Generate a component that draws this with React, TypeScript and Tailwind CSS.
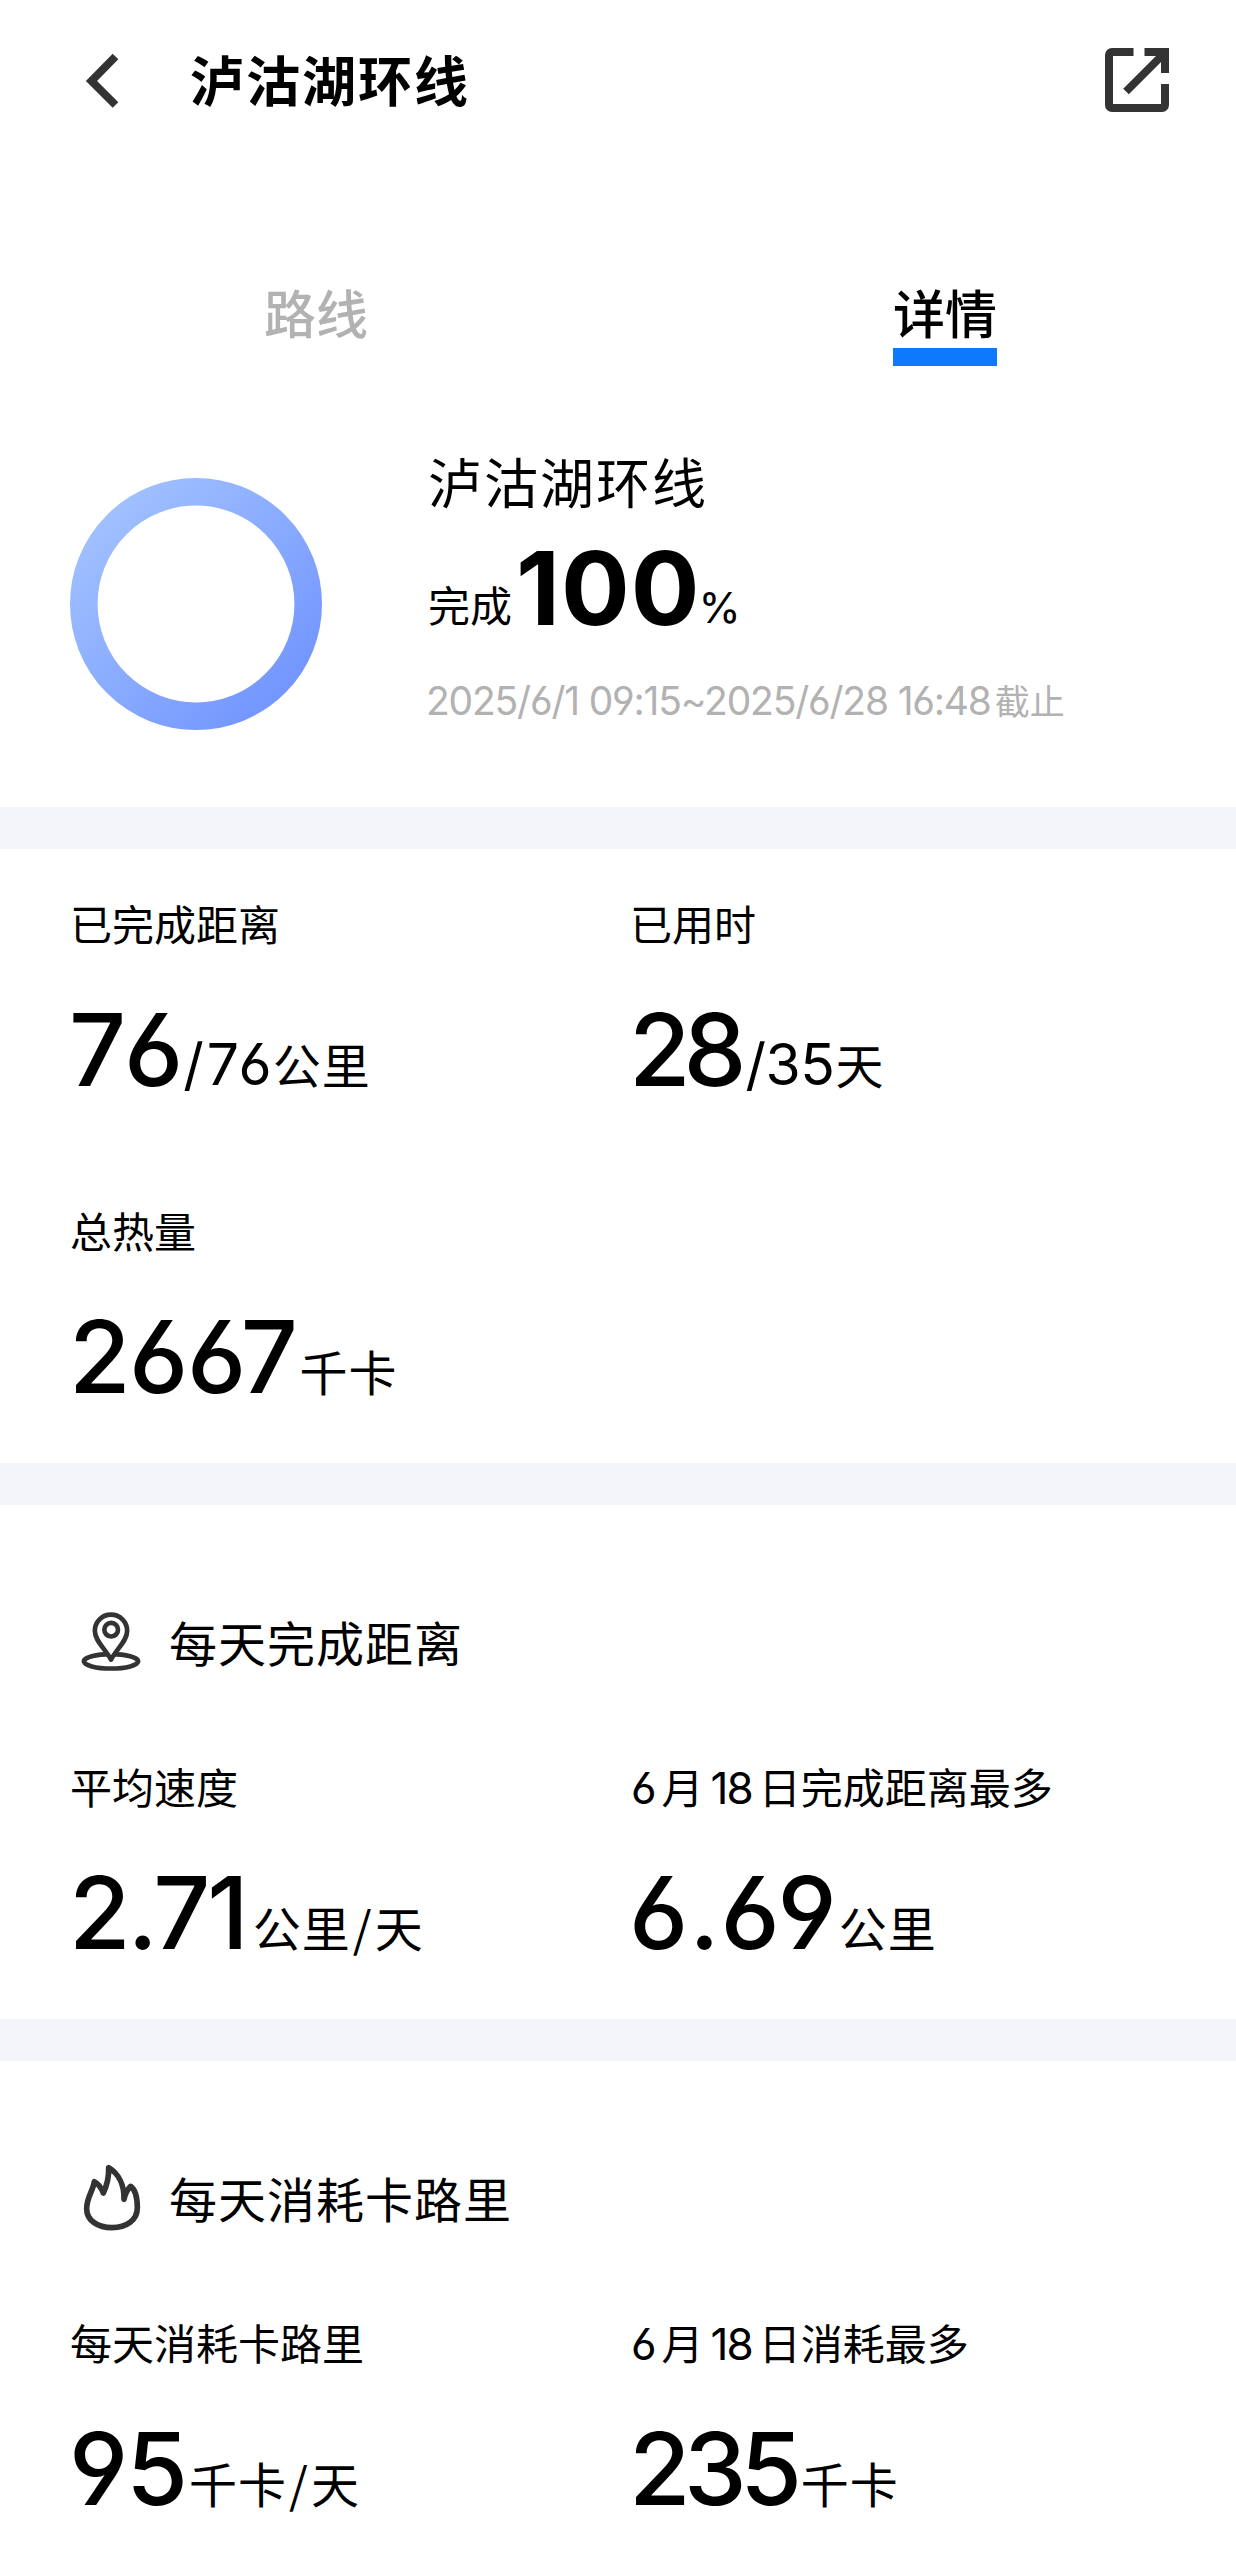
import { ReactNode } from 'react';
import { clsx } from 'clsx';

interface Stat {
    label: string;
    value: string;
    valueClass: string;
    unit: string;
    // secondary figure shown after the main value, e.g. "/76"
    total?: string;
    totalClass?: string;
}

const CJK = "font-['Noto_Sans_CJK_SC',sans-serif]";
const NUM = "font-['Inter','Noto_Sans_CJK_SC',sans-serif] [font-feature-settings:'cv03','cv04']";

const overview: Stat[] = [
    { label: '已完成距离', value: '76', valueClass: 'tracking-[4px] mr-[-4px]', total: '/76', totalClass: 'tracking-[3px] mr-[-2px]', unit: '公里' },
    { label: '已用时', value: '28', valueClass: 'tracking-[-7px] mr-1.5', total: '/35', totalClass: 'tracking-[-0.5px] mr-px', unit: '天' },
    { label: '总热量', value: '2667', valueClass: 'tracking-[-1.5px] mr-[3px]', unit: '千卡' },
];

const distance: Stat[] = [
    { label: '平均速度', value: '2.71', valueClass: 'tracking-[-3px] mr-[7px]', unit: '公里/天' },
    { label: '6月18日完成距离最多', value: '6.69', valueClass: 'tracking-[1px] mr-px', unit: '公里' },
];

const calories: Stat[] = [
    { label: '每天消耗卡路里', value: '95', valueClass: 'tracking-[-2px] mr-[3px]', unit: '千卡/天' },
    { label: '6月18日消耗最多', value: '235', valueClass: 'tracking-[-6.5px] mr-[5px]', unit: '千卡' },
];

function BackIcon() {
    return (
        <svg width="34" height="56" viewBox="0 0 34 56" fill="none" stroke="#333333" strokeWidth="8">
            <path d="M30.500 4.500 6.500 29l24 24" />
        </svg>
    );
}

function ShareIcon() {
    return (
        <svg width="64" height="64" viewBox="0 0 64 64" fill="none" stroke="#333333" strokeWidth="8">
            <path d="M28.500 4H7a3 3 0 0 0-3 3v50a3 3 0 0 0 3 3h50a3 3 0 0 0 3-3V36" strokeLinejoin="round" />
            <path d="M39.500 4H60v21" />
            <path d="M21 43.500 57 7.500" />
        </svg>
    );
}

function PinIcon() {
    return (
        <svg width="60" height="60" viewBox="62 64 180 180" fill="none" stroke="#333333" strokeWidth="14">
            <ellipse cx="152" cy="215" rx="81.500" ry="21.500" />
            <path
                d="M152 210C134 176 103.500 154 103.500 123.500a48.500 48.500 0 0 1 97 0C200.500 154 170 176 152 210Z"
                fill="#ffffff"
                strokeLinejoin="round"
            />
            <circle cx="152.500" cy="120" r="20.500" />
        </svg>
    );
}

function FlameIcon() {
    return (
        <svg width="60" height="68" viewBox="63 69 180 204" fill="none" stroke="#333333" strokeWidth="17" strokeLinejoin="round">
            <path d="M146 83C147 114 140 138 130 159 124 143 115 131 103 125 98 155 80 172 80 206 80 242 114 263 156 263 200 263 232 240 232 203 232 174 228 151 212 139 201 150 195 162 192 178 193 136 176 101 146 83Z" />
        </svg>
    );
}

function Label({ text }: { text: string }) {
    return (
        <div className="flex h-[42px] items-baseline text-[42px] leading-none whitespace-nowrap">
            {text.split(/(\d+)/).filter(Boolean).map((part, i) => (
                <span key={i} className={clsx(/\d/.test(part) && [NUM, 'px-[7px] text-[44px] leading-none tracking-[-2px] first:pl-px'])}>
                    {part}
                </span>
            ))}
        </div>
    );
}

function StatItem({ label, value, valueClass, total, totalClass, unit }: Stat) {
    return (
        <div>
            <Label text={label} />
            <div className="mt-14 ml-[-1px] flex h-[100px] items-end whitespace-nowrap">
                <span className={clsx(NUM, 'text-[100px] leading-none font-medium', valueClass)}>{value}</span>
                {total && <span className={clsx(NUM, 'mb-[7px] text-[57px] leading-none', totalClass)}>{total}</span>}
                <span className="mb-[13px] text-[48px] leading-none tracking-[1px]">
                    {unit.split(/(\/)/).map((part, i) => (
                        <span key={i} className={clsx(part === '/' && 'mx-[2px]')}>{part}</span>
                    ))}
                </span>
            </div>
        </div>
    );
}

function StatGrid({ items }: { items: Stat[] }) {
    return (
        <div className="grid grid-cols-[560px_1fr] gap-y-[109px]">
            {items.map((item) => (
                <StatItem key={item.label} {...item} />
            ))}
        </div>
    );
}

function Section({ icon, title, items }: { icon?: ReactNode; title?: string; items: Stat[] }) {
    return (
        <section className={clsx('border-t-[42px] border-[#f3f5f9] pb-14 pl-[70px]', title ? 'pt-28' : 'pt-[53px]')}>
            {title && (
                <div className="mb-[100px] flex h-12 items-center pl-[11px]">
                    {icon}
                    <h2 className="ml-7 text-[48px] leading-none tracking-[1px]">{title}</h2>
                </div>
            )}
            <StatGrid items={items} />
        </section>
    );
}

export default function App() {
    return (
        <div className={clsx(CJK, 'h-[2555px] w-[1236px] overflow-hidden bg-white text-black')}>
            <header className="flex h-40 items-center pr-[67px] pl-[85px]">
                <BackIcon />
                <h1 className="ml-[71px] pb-0.5 text-[54px] leading-none font-bold tracking-[2px]">泸沽湖环线</h1>
                <div className="ml-auto">
                    <ShareIcon />
                </div>
            </header>

            <nav className="flex gap-[525px] pt-[126px] pl-[264px] text-[52px] leading-none font-medium">
                <div className="text-[#b2b2b2]">路线</div>
                <div className="border-b-[18px] border-[#0d79ff] pb-[10px]">详情</div>
            </nav>

            <div className="flex h-[441px] pt-[88px] pl-[70px]">
                <svg className="mt-6" width="252" height="252" viewBox="0 0 252 252">
                    <defs>
                        <linearGradient id="ring" x1="0" y1="0" x2="1" y2="1">
                            <stop offset="0.1" stopColor="#a0c0ff" />
                            <stop offset="0.9" stopColor="#7396ff" />
                        </linearGradient>
                    </defs>
                    <circle cx="126" cy="126" r="112.200" fill="none" stroke="url(#ring)" strokeWidth="27.600" />
                </svg>
                <div className="ml-[106px] whitespace-nowrap">
                    <div className="text-[54px] leading-none tracking-[2px]">泸沽湖环线</div>
                    <div className="mt-[31px] flex h-[100px] items-end">
                        <span className="mb-3.5 text-[42px] leading-none">完成</span>
                        <span className={clsx(NUM, 'ml-[4px] text-[102px] leading-none font-bold tracking-[1px]')}>100</span>
                        <span className={clsx(NUM, 'mb-2.5 ml-[-2px] text-[43px] leading-none')}>%</span>
                    </div>
                    <div className="mt-[42px] flex items-baseline leading-none text-[#b2b2b2]">
                        <span className={clsx(NUM, 'ml-[-2px] text-[39px] leading-none tracking-[-1.200px]')}>
                            2025/6/1 09:15~2025/6/28 16:48
                        </span>
                        <span className="ml-1 text-[35px] leading-none">截止</span>
                    </div>
                </div>
            </div>

            <Section items={overview} />
            <Section icon={<PinIcon />} title="每天完成距离" items={distance} />
            <Section icon={<FlameIcon />} title="每天消耗卡路里" items={calories} />
        </div>
    );
}
